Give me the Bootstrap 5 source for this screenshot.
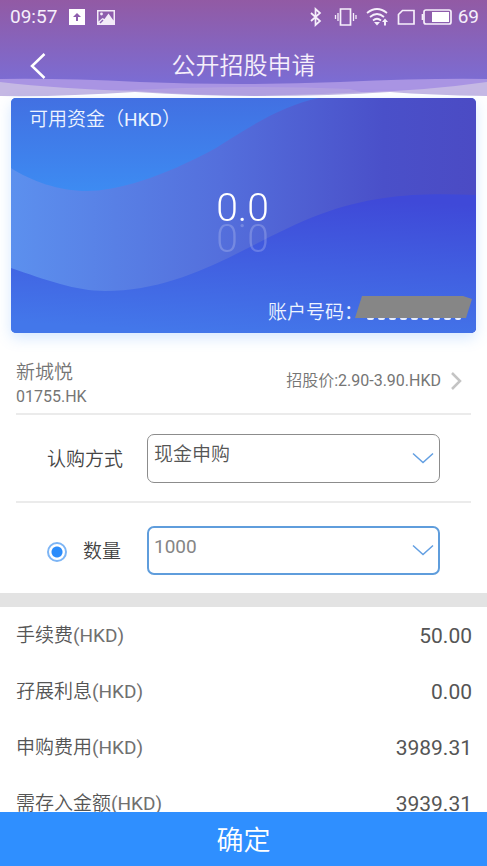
<!DOCTYPE html>
<html lang="zh-CN">
<head>
<meta charset="utf-8">
<meta name="viewport" content="width=device-width, initial-scale=1">
<title>公开招股申请</title>
<link href="https://cdn.jsdelivr.net/npm/bootstrap@5.3.0/dist/css/bootstrap.min.css" rel="stylesheet">
<style>
  body { font-family: Roboto, "Noto Sans CJK SC", sans-serif; font-size: 19px; line-height: 24px; color: #666; background: #fff; }
  .app-header { background: linear-gradient(#925aa4, #7c6cd2 80px); color: #f6effb; }
  .status-bar { height: 34px; padding: 0 8px 0 10px; font-size: 19px; }
  .title-bar { height: 63px; padding: 0 28px; }
  .title-bar h1 { font-size: 24px; line-height: 44px; font-weight: 350; }
  .back-btn { width: 20px; }
  .header-wave { height: 19px; width: 100%; margin-top: -19px; }
  .fund-card { margin: 1px 11px 0; border-radius: 5px; color: #eef4ff; min-height: 235px; background: #4670e8; box-shadow: 0 5px 14px rgba(90, 165, 255, .25); font-weight: 350; }
  .card-art { border-radius: 5px; }
  .fund-body { min-height: 235px; padding: 10px 4px 8px 18px; }
  .fund-amount { font-size: 39px; line-height: 40px; color: #fff; -webkit-box-reflect: below -11px linear-gradient(rgba(255, 255, 255, .2), rgba(255, 255, 255, .2)); }
  .account-label { padding-top: 4px; }
  .account-mask { width: 117px; height: 26px; margin-left: -8px; margin-bottom: 3px; }
  .sheet { padding: 0 16px; }
  .stock-row { padding: 20px 8px 4px 0; border-bottom: 2px solid #ebebeb; color: #757575; }
  .stock-code, .stock-price { font-size: 16px; }
  .cjk-light { font-weight: 350; }
  .form-row { padding: 19px 31px 18px 31px; }
  .form-row + .form-row { border-top: 2px solid #ebebeb; padding-top: 23px; }
  .field-label { width: 100px; padding-top: 2px; color: #444; font-weight: 350; }
  .field-select { height: 49px; padding: 0 36px 7px 6px; color: #555; background: none; border: 1px solid #8c8c8c; border-radius: 7px; appearance: none; font-weight: 350; outline: 0; }
  .field-select.is-active { border: 2px solid #5f9ddc; padding-left: 5px; color: #858585; font-weight: 400; }
  .select-arrow { right: 6px; top: 18px; pointer-events: none; }
  .qty-radio { width: 20px; height: 20px; margin: 0 16px 0 0; appearance: none; border: 2px solid #7db5f5; border-radius: 50%; background: radial-gradient(#2b8cfb 5px, #fff 6px); }
  .section-gap { height: 14px; background: #e3e3e3; }
  .fee-list { padding: 1px 15px 54px 16px; }
  .fee-row { height: 56px; }
  .fee-name { font-weight: 350; color: #555; }
  .fee-name span { color: #707070; }
  .fee-value { font-size: 21px; color: #555; }
  .submit-btn { background: #2f8fff; color: #fff; font-size: 27px; font-weight: 350; line-height: 50px; padding: 4px 0 0; }
</style>
</head>
<body class="vh-100 overflow-hidden">
<header class="app-header">
  <div class="status-bar d-flex align-items-center">
    <span>09:57</span>
    <svg class="ms-2" width="60" height="20" viewBox="0 0 60 20" aria-hidden="true">
      <path fill="#fff" fill-rule="evenodd" d="M4 2h16v16H4zM12 6l-4 4h3v4h2v-4h3z"/>
      <path fill="#f3ebf8" fill-rule="evenodd" d="M32 3h18v15H32zM33.500 4.500v10l4-3.500 2 1 4-5.500 5 7V4.500z"/>
      <circle cx="36.500" cy="7" r="1.400" fill="#f3ebf8"/>
      <path d="M35 16l3-3" stroke="#8b62b2" stroke-width="1.500"/>
    </svg>
    <svg class="ms-auto" width="146" height="20" viewBox="307 7 146 20" fill="none" stroke="#f6effb" stroke-width="1.700" aria-hidden="true">
      <path d="M310 13l9 8-4.500 4V9l4.500 4-9 8"/>
      <path d="M339.500 9h10v16h-10z"/>
      <path d="M337 13v8M334.500 15v4M352.500 13v8M355 15v4" stroke-width="1.300"/>
      <path d="M366 13q10-8 20 0M369 17q7-6 14 0M372 20.500q4-3.500 8 0"/>
      <path d="M373 22h6l-3 3.500z" fill="#f6effb" stroke="none"/>
      <path d="M381 22l3-3.500 3 3.500h-2v3.500h-2v-3.500z" fill="#f6effb" stroke="none"/>
      <path d="M397.500 24v-9.500l4-4h11.500V24z"/>
      <rect x="423" y="10" width="27" height="14" rx="2"/>
      <path d="M421.500 14v6"/>
      <path d="M431 12h17v10h-17z" fill="#fff" stroke="none"/>
    </svg>
    <span class="ms-1">69</span>
  </div>
  <div class="title-bar d-flex align-items-center">
    <button class="btn border-0 p-0 back-btn d-flex" type="button" aria-label="返回">
      <svg width="20" height="26" viewBox="0 0 20 26" fill="none" stroke="#fff" stroke-width="2.500"><path d="M16.500 1L4 13l12.500 12"/></svg>
    </button>
    <h1 class="flex-grow-1 text-center m-0">公开招股申请</h1>
    <span class="back-btn"></span>
  </div>
  <svg class="header-wave d-block" viewBox="0 0 487 19" preserveAspectRatio="none" aria-hidden="true">
    <path fill="#a994e3" d="M0 1Q60 0 140 4Q240 8 340 4Q430 0 487 1V19H0z"/>
    <path fill="#b3a0e0" d="M110 13Q240 6 350 11L380 19H100z"/>
    <path fill="#c5b8e4" d="M0 4Q60 11 135 13Q190 17 250 18V19H0z"/>
    <path fill="#c5b8e4" d="M487 4Q430 12 370 14Q310 17 250 18V19H487z"/>
    <path fill="#fff" d="M0 18Q60 19 135 14Q200 18 262 18Q330 18 390 14Q430 17 487 18V19H0z"/>
  </svg>
</header>

<main>
  <section class="fund-card position-relative">
    <svg class="card-art position-absolute top-0 start-0 w-100 h-100" viewBox="0 0 465 235" preserveAspectRatio="none" aria-hidden="true">
      <defs>
        <linearGradient id="topTone" x1="0" y1="0" x2="0" y2="1"><stop stop-color="#4270e2"/><stop offset="1" stop-color="#3d8bf2"/></linearGradient>
        <linearGradient id="midTone"><stop stop-color="#5c90ee"/><stop offset=".45" stop-color="#546fdc"/><stop offset=".8" stop-color="#4a50c9"/><stop offset="1" stop-color="#4b4bc4"/></linearGradient>
        <linearGradient id="lowTone" x1=".6" y1="0" x2=".4" y2="1"><stop stop-color="#3f49d8"/><stop offset="1" stop-color="#4377ea"/></linearGradient>
      </defs>
      <rect width="465" height="235" fill="url(#midTone)"/>
      <path fill="url(#topTone)" d="M0 0H308C270 8 240 28 205 50C150 80 105 93 76 93C48 93 20 83 0 70z"/>
      <path fill="url(#lowTone)" d="M0 170C35 182 65 193 94 193C180 193 240 142 310 116C365 96 410 95 465 97V235H0z"/>
    </svg>
    <div class="fund-body position-relative d-flex flex-column">
      <div>可用资金（<span class="fw-normal">HKD</span>）</div>
      <div class="fund-amount text-center mt-5 pt-2 pe-3">0.0</div>
      <div class="d-flex justify-content-end align-items-center mt-auto">
        <span class="account-label">账户号码：</span>
        <svg class="account-mask d-block" viewBox="0 0 117 26" role="img" aria-label="账户号码已隐藏">
          <path fill="none" stroke="#e4ecff" stroke-width="4" stroke-linecap="round" stroke-dasharray="3 8" d="M14 22h90"/>
          <path fill="#868686" d="M7 0h101l9 3-6 19H0z"/>
        </svg>
      </div>
    </div>
  </section>

  <section class="sheet">
    <a href="#" class="stock-row d-flex align-items-center text-decoration-none">
      <span class="pt-2">
        <span class="d-block cjk-light">新城悦</span>
        <span class="d-block stock-code">01755.HK</span>
      </span>
      <span class="stock-price ms-auto"><span class="cjk-light">招股价</span>:2.90-3.90.HKD</span>
      <svg class="ms-2" width="14" height="20" viewBox="0 0 14 20" fill="none" stroke="#c4c4c4" stroke-width="2.500"><path d="M3 2l8 8-8 8"/></svg>
    </a>
    <div class="form-row d-flex align-items-center">
      <label class="field-label" for="method">认购方式</label>
      <div class="position-relative flex-grow-1">
        <select class="field-select w-100 d-block" id="method"><option>现金申购</option></select>
        <svg class="select-arrow position-absolute" width="22" height="13" viewBox="0 0 22 13" fill="none" stroke="#629fe2" stroke-width="1.500"><path d="M1 1.500l10 9 10-9"/></svg>
      </div>
    </div>
    <div class="form-row d-flex align-items-center">
      <div class="field-label d-flex align-items-center">
        <input class="qty-radio" type="radio" id="useQty" name="mode" checked>
        <label for="useQty">数量</label>
      </div>
      <div class="position-relative flex-grow-1">
        <select class="field-select is-active w-100 d-block" aria-label="数量"><option>1000</option></select>
        <svg class="select-arrow position-absolute" width="22" height="13" viewBox="0 0 22 13" fill="none" stroke="#629fe2" stroke-width="1.500"><path d="M1 1.500l10 9 10-9"/></svg>
      </div>
    </div>
  </section>

  <div class="section-gap"></div>

  <section class="fee-list">
    <div class="fee-row d-flex align-items-center justify-content-between"><span class="fee-name">手续费<span class="fw-normal">(HKD)</span></span><span class="fee-value">50.00</span></div>
    <div class="fee-row d-flex align-items-center justify-content-between"><span class="fee-name">孖展利息<span class="fw-normal">(HKD)</span></span><span class="fee-value">0.00</span></div>
    <div class="fee-row d-flex align-items-center justify-content-between"><span class="fee-name">申购费用<span class="fw-normal">(HKD)</span></span><span class="fee-value">3989.31</span></div>
    <div class="fee-row d-flex align-items-center justify-content-between"><span class="fee-name">需存入金额<span class="fw-normal">(HKD)</span></span><span class="fee-value">3939.31</span></div>
  </section>
</main>

<button class="submit-btn btn rounded-0 border-0 w-100 fixed-bottom" type="submit">确定</button>
<script src="https://cdn.jsdelivr.net/npm/bootstrap@5.3.0/dist/js/bootstrap.bundle.min.js"></script>
</body>
</html>
